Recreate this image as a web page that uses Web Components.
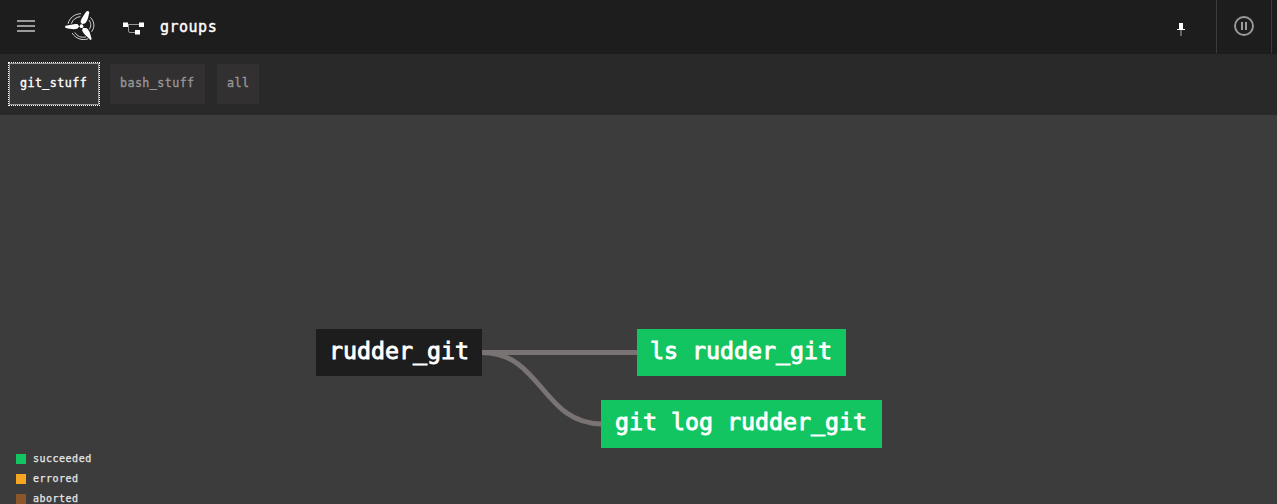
<!DOCTYPE html>
<html lang="en"><head><meta charset="utf-8"><title>groups</title>
<style>html,body{margin:0;height:100%;overflow:hidden;background:#3d3c3c}body{font-family:"DejaVu Sans Mono",monospace;color:#fff}</style></head>
<body><pipeline-page></pipeline-page>
<script>
const define=(name,markup)=>customElements.define(name,class extends HTMLElement{
  constructor(){super();this.attachShadow({mode:'open'}).innerHTML=markup}
});
define('top-bar',`<style>
:host{display:flex;height:54px;background:#1e1d1d;align-items:center;flex:none}
svg{display:block;flex:none}.menu{margin:0 0 2px 17px}.logo{margin:0 0 2px 27px}.pipe{margin:4px 0 0 26px}
.title{font-size:15px;letter-spacing:.5px;margin:0 0 1px 16px;line-height:20px;-webkit-text-stroke:.4px #fff}
.space{flex:1}.pin{margin:4px 31px 0 0}.pause{box-sizing:border-box;width:56px;height:53px;padding-bottom:1px;align-self:flex-start;border:solid #3d3c3c;border-width:0 1px;display:flex;justify-content:center;align-items:center;margin-right:5px}
</style>
<svg class="menu" width="18" height="14"><path d="M0 2h18M0 7h18M0 12h18" stroke="#9b9b9b" stroke-width="2"/></svg>
<svg class="logo" width="35" height="32" viewBox="62 10 35 32">
<g fill="#fff"><circle cx="81.5" cy="26.2" r="1.9"/>
<path d="M79.2 26.4 77.7 24.2C74 23.6 70.5 25.3 65.5 25.7Q64.2 27.4 66 28.1C70 29 74.5 29.8 77.6 28.6Z"/>
<path d="M82 24 84.8 23.6C88 20.8 88.2 17 89.3 12.2Q88 10.2 86.1 11.8C84 15.4 80.9 18.5 80.5 22.1Z"/>
<path d="M82.8 28 82.1 30.4C83.4 34 87.2 36.4 90.4 40Q92 39.8 91.4 38C90.4 34.3 89.6 30 86.2 28Z"/></g>
<g fill="none" stroke="#fff" stroke-width=".95" opacity=".85"><path d="M68.1 23.8C69.5 17.6 74.5 14 81 13.7M71.4 23.6C72.7 19.5 75.8 17.2 80.4 16.6M90.4 17.3C94.6 21.7 95 27.5 91.5 31.8M89 20C91.2 23 91.4 26.4 89.2 29.4M72.1 33C75.6 38.4 81.3 40.9 88.2 38.8M74.8 32.4C77.4 36.4 81 38 86 36.9"/></g></svg>
<svg class="pipe" width="21" height="14"><path d="M3 2.5h15M5.5 3v6q0 1.5 1.5 1.5h5" fill="none" stroke="#999" stroke-width="1"/><path d="M0 .5h5v4.5H0zM16 .5h5v4.5h-5zM12 8h5v4.5h-5z" fill="#fff"/></svg>
<div class="title">groups</div><div class="space"></div>
<svg class="pin" width="8" height="14"><path d="M2 1h4v6h2v1H0V7h2z" fill="#fff"/><path d="M3 8h2v6H3z" fill="#666"/></svg>
<div class="pause"><svg width="20" height="20"><circle cx="10" cy="10" r="9" fill="none" stroke="#9b9b9b" stroke-width="1.9"/><path d="M7 6h2v8H7zM11 6h2v8h-2z" fill="#9b9b9b"/></svg></div>`);
define('group-tab',`<style>
:host{display:block;box-sizing:border-box;height:40px;padding:0 10px;background:#323030;color:#979797;font-size:11.7px;letter-spacing:.42px;line-height:39px;white-space:nowrap;-webkit-text-stroke:.35px currentColor}
:host([selected]){color:#fff;background:#353434;outline:1px solid #999;position:relative}
:host([selected])::after{content:"";position:absolute;inset:-2px;border:1px dotted #fff}
</style><slot></slot>`);
define('group-tabs',`<style>:host{display:flex;box-sizing:border-box;height:61px;flex:none;background:#2a2929;padding:10px;gap:12px}</style><slot></slot>`);
define('job-node',`<style>
:host{position:absolute;box-sizing:border-box;height:47px;padding-left:13px;background:#12c560;font-size:23.25px;line-height:43px;white-space:pre;-webkit-text-stroke:.9px #fff}
:host([resource]){background:#1e1d1d}</style><slot></slot>`);
define('job-graph',`<style>:host{display:block;position:absolute;inset:0}svg{position:absolute;inset:0}</style>
<svg width="1277" height="389"><path d="M482 237.5H637M482 237.5C542 237.5 542 309 602 309" fill="none" stroke="#7a7373" stroke-width="5"/></svg><slot></slot>`);
define('status-item',`<style>:host{display:flex;align-items:center;height:20px;font-size:10px;letter-spacing:.5px;gap:7px;color:#e6e7e8}i{width:10px;height:10px;background:var(--status)}span{line-height:20px;-webkit-text-stroke:.25px currentColor}</style><i></i><span><slot></slot></span>`);
define('status-legend',`<style>:host{display:flex;flex-direction:column;position:absolute;left:16px;top:334px}</style><slot></slot>`);
define('pipeline-page',`<style>:host{display:flex;flex-direction:column;height:504px;overflow:hidden}main{flex:1;position:relative;overflow:hidden;background:#3d3c3c}</style>
<top-bar></top-bar>
<group-tabs><group-tab selected style="width:88px">git_stuff</group-tab><group-tab style="width:95px">bash_stuff</group-tab><group-tab style="width:42px">all</group-tab></group-tabs>
<main><job-graph>
<job-node resource style="left:316px;top:214px;width:166px">rudder_git</job-node>
<job-node style="left:637px;top:214px;width:209px">ls rudder_git</job-node>
<job-node style="left:601px;top:285px;width:281px;height:48px;padding-left:14px">git log rudder_git</job-node>
</job-graph><status-legend>
<status-item style="--status:#12c560">succeeded</status-item><status-item style="--status:#f5a623">errored</status-item><status-item style="--status:#8b572a">aborted</status-item>
</status-legend></main>`);
</script></body></html>
